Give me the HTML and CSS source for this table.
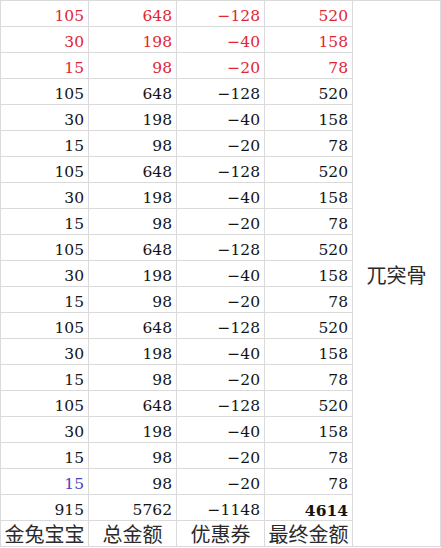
FILE: index.html
```html
<!DOCTYPE html>
<html>
<head>
<meta charset="utf-8">
<link rel="stylesheet" href="styles.css">
</head>
<body>
<div class="sheet">
  <div class="c red">105</div><div class="c red">648</div><div class="c red">−128</div><div class="c red">520</div>
  <div class="merged" lang="zh">兀突骨</div>
  <div class="c red">30</div><div class="c red">198</div><div class="c red">−40</div><div class="c red">158</div>
  <div class="c red">15</div><div class="c red">98</div><div class="c red">−20</div><div class="c red">78</div>

  <div class="c">105</div><div class="c">648</div><div class="c">−128</div><div class="c">520</div>
  <div class="c">30</div><div class="c">198</div><div class="c">−40</div><div class="c">158</div>
  <div class="c">15</div><div class="c">98</div><div class="c">−20</div><div class="c">78</div>

  <div class="c">105</div><div class="c">648</div><div class="c">−128</div><div class="c">520</div>
  <div class="c">30</div><div class="c">198</div><div class="c">−40</div><div class="c">158</div>
  <div class="c">15</div><div class="c">98</div><div class="c">−20</div><div class="c">78</div>

  <div class="c">105</div><div class="c">648</div><div class="c">−128</div><div class="c">520</div>
  <div class="c">30</div><div class="c">198</div><div class="c">−40</div><div class="c">158</div>
  <div class="c">15</div><div class="c">98</div><div class="c">−20</div><div class="c">78</div>

  <div class="c">105</div><div class="c">648</div><div class="c">−128</div><div class="c">520</div>
  <div class="c">30</div><div class="c">198</div><div class="c">−40</div><div class="c">158</div>
  <div class="c">15</div><div class="c">98</div><div class="c">−20</div><div class="c">78</div>

  <div class="c">105</div><div class="c">648</div><div class="c">−128</div><div class="c">520</div>
  <div class="c">30</div><div class="c">198</div><div class="c">−40</div><div class="c">158</div>
  <div class="c">15</div><div class="c">98</div><div class="c">−20</div><div class="c">78</div>

  <div class="c blue">15</div><div class="c">98</div><div class="c">−20</div><div class="c">78</div>

  <div class="c">915</div><div class="c">5762</div><div class="c">−1148</div><div class="c bold">4614</div>

  <div class="h" lang="zh">金兔宝宝</div><div class="h" lang="zh">总金额</div><div class="h" lang="zh">优惠券</div><div class="h" lang="zh">最终金额</div>
</div>
</body>
</html>
```

FILE: styles.css
```css
html, body {
  margin: 0;
  padding: 0;
  background: #ffffff;
}

.sheet {
  display: grid;
  grid-template-columns: repeat(5, 88px);
  grid-template-rows: repeat(21, 26px);
  border-top: 1px solid #dadada;
  border-left: 1px solid #dadada;
  width: max-content;
  color: #141414;
}

.c, .h, .merged {
  box-sizing: border-box;
  border-right: 1px solid #dadada;
  border-bottom: 1px solid #dadada;
  white-space: nowrap;
}

.c {
  font-family: "DejaVu Serif", serif;
  font-size: 15.5px;
  line-height: 21px;
  padding: 5px 4px 0 0;
  text-align: right;
}

.red {
  color: #e3252e;
}

.blue {
  color: #4a3fc0;
}

.bold {
  font-weight: bold;
}

.h {
  font-family: "Noto Sans CJK SC", sans-serif;
  font-size: 20px;
  line-height: 22px;
  padding-top: 2px;
  text-align: center;
  color: #2a2a2a;
}

.merged {
  grid-column: 5;
  grid-row: 1 / span 21;
  display: flex;
  align-items: center;
  justify-content: center;
  font-family: "Noto Sans CJK SC", sans-serif;
  font-size: 20px;
  line-height: 22px;
  color: #2a2a2a;
  padding-top: 2px;
}
```
